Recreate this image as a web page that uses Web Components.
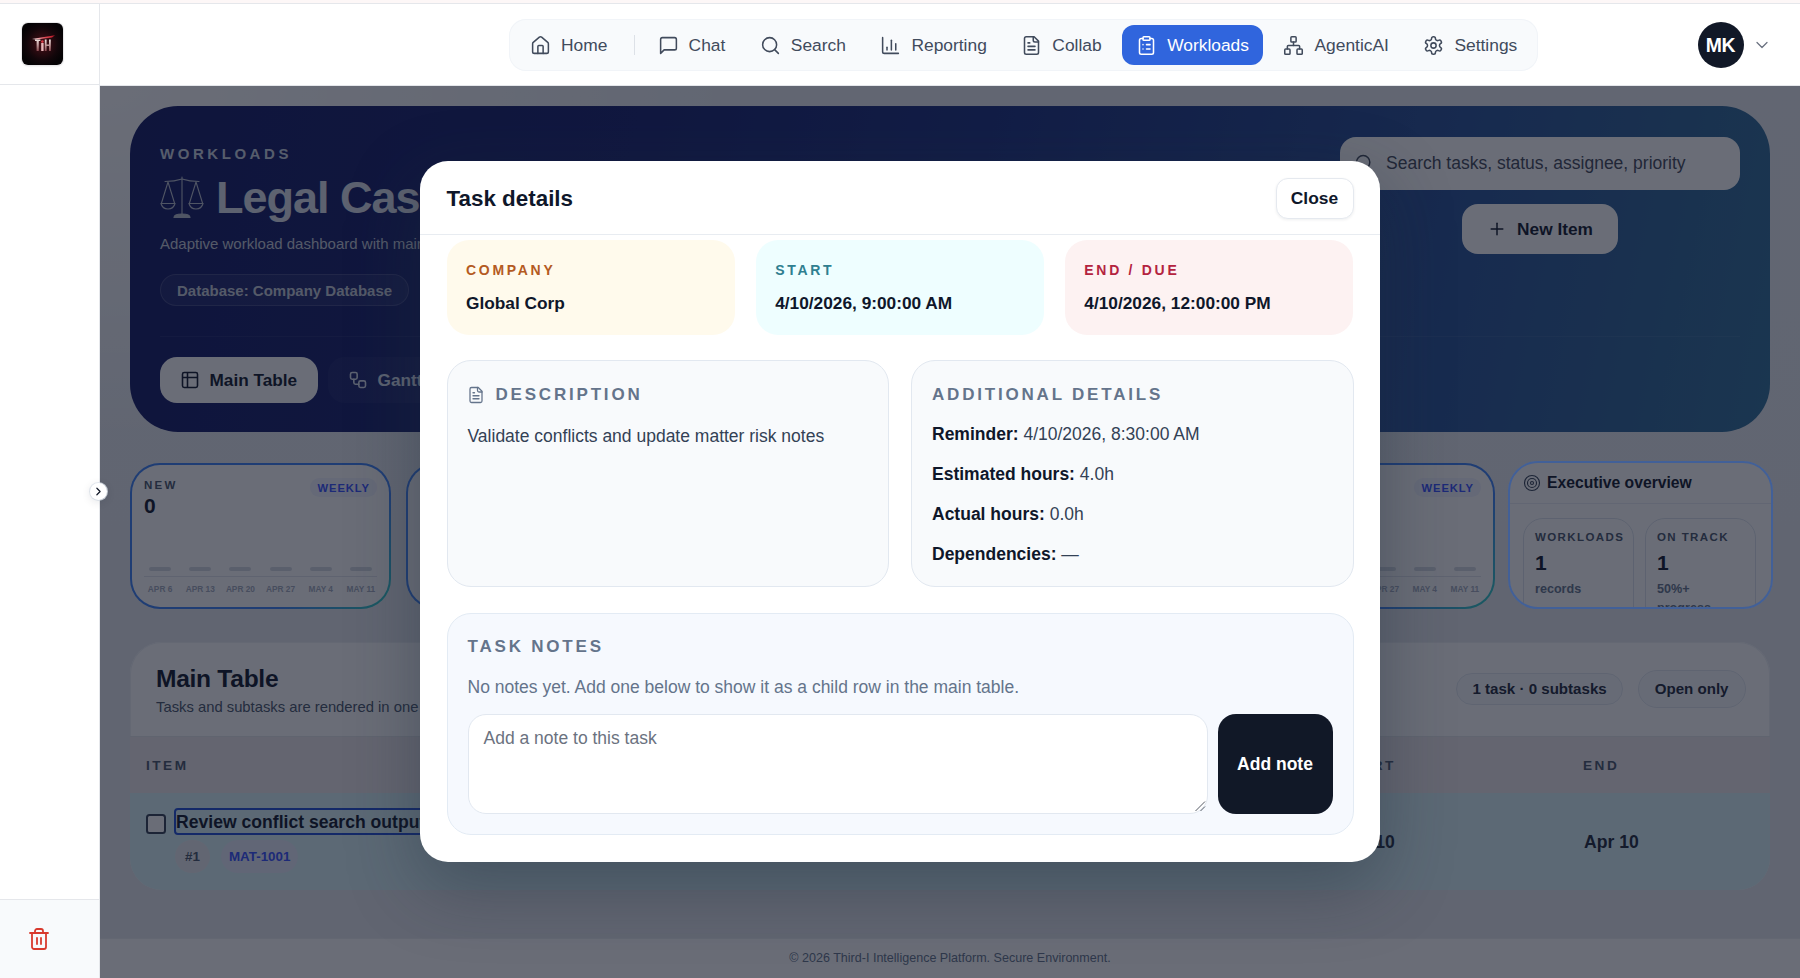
<!DOCTYPE html>
<html lang="en">
<head>
<meta charset="utf-8">
<title>Workloads</title>
<style>
  html,body{margin:0;padding:0;height:978px;overflow:hidden;background:#fff;font-family:"Liberation Sans",Arial,sans-serif;color:#0f172a}
</style>
</head>
<body>
<app-frame>
  <side-rail slot="rail"></side-rail>
  <top-bar slot="top">
    <nav-item icon="home">Home</nav-item>
    <nav-sep></nav-sep>
    <nav-item icon="chat">Chat</nav-item>
    <nav-item icon="search">Search</nav-item>
    <nav-item icon="chart">Reporting</nav-item>
    <nav-item icon="file">Collab</nav-item>
    <nav-item icon="clipboard" active>Workloads</nav-item>
    <nav-item icon="network">AgenticAI</nav-item>
    <nav-item icon="gear">Settings</nav-item>
  </top-bar>
  <work-area slot="main">
    <hero-panel></hero-panel>
    <kpi-row>
      <kpi-card label="New" value="0" weeks></kpi-card>
      <kpi-card></kpi-card>
      <kpi-card></kpi-card>
      <kpi-card></kpi-card>
      <kpi-card weeks></kpi-card>
      <exec-card></exec-card>
    </kpi-row>
    <main-table></main-table>
    <page-footer>© 2026 Third-I Intelligence Platform. Secure Environment.</page-footer>
    <dim-layer></dim-layer>
  </work-area>
</app-frame>
<task-modal></task-modal>

<script>
const ICONS={
 home:'<path d="M15 21v-8a1 1 0 0 0-1-1h-4a1 1 0 0 0-1 1v8"/><path d="M3 10a2 2 0 0 1 .709-1.528l7-5.999a2 2 0 0 1 2.582 0l7 5.999A2 2 0 0 1 21 10v9a2 2 0 0 1-2 2H5a2 2 0 0 1-2-2z"/>',
 chat:'<path d="M21 15a2 2 0 0 1-2 2H7l-4 4V5a2 2 0 0 1 2-2h14a2 2 0 0 1 2 2z"/>',
 search:'<circle cx="11" cy="11" r="8"/><path d="m21 21-4.3-4.3"/>',
 chart:'<path d="M3 3v16a2 2 0 0 0 2 2h16"/><path d="M18 17V10"/><path d="M13 17V6"/><path d="M8 17v-3"/>',
 file:'<path d="M15 2H6a2 2 0 0 0-2 2v16a2 2 0 0 0 2 2h12a2 2 0 0 0 2-2V7Z"/><path d="M14 2v4a2 2 0 0 0 2 2h4"/><path d="M10 9H8"/><path d="M16 13H8"/><path d="M16 17H8"/>',
 clipboard:'<rect width="8" height="4" x="8" y="2" rx="1" ry="1"/><path d="M16 4h2a2 2 0 0 1 2 2v14a2 2 0 0 1-2 2H6a2 2 0 0 1-2-2V6a2 2 0 0 1 2-2h2"/><path d="M12 11h4"/><path d="M12 16h4"/><path d="M8 11h.01"/><path d="M8 16h.01"/>',
 network:'<rect x="16" y="16" width="6" height="6" rx="1"/><rect x="2" y="16" width="6" height="6" rx="1"/><rect x="9" y="2" width="6" height="6" rx="1"/><path d="M5 16v-3a1 1 0 0 1 1-1h12a1 1 0 0 1 1 1v3"/><path d="M12 12V8"/>',
 gear:'<path d="M12.22 2h-.44a2 2 0 0 0-2 2v.18a2 2 0 0 1-1 1.73l-.43.25a2 2 0 0 1-2 0l-.15-.08a2 2 0 0 0-2.73.73l-.22.38a2 2 0 0 0 .73 2.73l.15.1a2 2 0 0 1 1 1.72v.51a2 2 0 0 1-1 1.74l-.15.09a2 2 0 0 0-.73 2.73l.22.38a2 2 0 0 0 2.73.73l.15-.08a2 2 0 0 1 2 0l.43.25a2 2 0 0 1 1 1.73V20a2 2 0 0 0 2 2h.44a2 2 0 0 0 2-2v-.18a2 2 0 0 1 1-1.73l.43-.25a2 2 0 0 1 2 0l.15.08a2 2 0 0 0 2.73-.73l.22-.39a2 2 0 0 0-.73-2.73l-.15-.08a2 2 0 0 1-1-1.74v-.5a2 2 0 0 1 1-1.74l.15-.09a2 2 0 0 0 .73-2.73l-.22-.38a2 2 0 0 0-2.73-.73l-.15.08a2 2 0 0 1-2 0l-.43-.25a2 2 0 0 1-1-1.73V4a2 2 0 0 0-2-2z"/><circle cx="12" cy="12" r="3"/>',
 table:'<path d="M9 3H5a2 2 0 0 0-2 2v4m6-6h10a2 2 0 0 1 2 2v4M9 3v18m0 0h10a2 2 0 0 0 2-2V9M9 21H5a2 2 0 0 1-2-2V9m0 0h18"/>',
 workflow:'<rect width="8" height="8" x="3" y="3" rx="2"/><path d="M7 11v4a2 2 0 0 0 2 2h4"/><rect width="8" height="8" x="13" y="13" rx="2"/>',
 target:'<circle cx="12" cy="12" r="10"/><circle cx="12" cy="12" r="6"/><circle cx="12" cy="12" r="2"/>',
 trash:'<path d="M3 6h18"/><path d="M19 6v14c0 1-1 2-2 2H7c-1 0-2-1-2-2V6"/><path d="M8 6V4c0-1 1-2 2-2h4c1 0 2 1 2 2v2"/><line x1="10" x2="10" y1="11" y2="17"/><line x1="14" x2="14" y1="11" y2="17"/>',
 plus:'<path d="M5 12h14"/><path d="M12 5v14"/>',
 down:'<path d="m6 9 6 6 6-6"/>',
 right:'<path d="m9 18 6-6-6-6"/>'
};
const icon=(n,s,w=1.8)=>`<svg xmlns="http://www.w3.org/2000/svg" width="${s}" height="${s}" viewBox="0 0 24 24" fill="none" stroke="currentColor" stroke-width="${w}" stroke-linecap="round" stroke-linejoin="round" style="flex:none;display:block">${ICONS[n]}</svg>`;

function def(tag,css,html){
  customElements.define(tag,class extends HTMLElement{
    constructor(){super();this.attachShadow({mode:'open'});}
    connectedCallback(){
      const a=n=>this.getAttribute(n)||'';
      this.shadowRoot.innerHTML=`<style>${css}</style>`+(typeof html==='function'?html(a,this):html);
    }
  });
}

def('app-frame',`
  :host{display:grid;grid-template-columns:100px 1fr;grid-template-rows:82px 892px;height:978px;box-sizing:border-box;padding-top:4px;position:relative;background:linear-gradient(#fdf7f7,#fdf7f7) top/100% 3px no-repeat,#fff}
  .line{position:absolute;left:0;right:0;top:3px;height:1px;background:#e5e7eb}
  ::slotted([slot=rail]){grid-row:1/3}
`,`<div class="line"></div><slot name="rail"></slot><slot name="top"></slot><slot name="main"></slot>`);

def('side-rail',`
  :host{display:flex;flex-direction:column;position:relative;z-index:10;background:#fff;border-right:1px solid #e5e7eb;box-sizing:border-box;width:100px;height:974px}
  .logo{height:81px;box-sizing:border-box;border-bottom:1px solid #e5e7eb;display:flex;align-items:flex-start;padding:19px 0 0 22px}
  .logo svg{display:block;border-radius:6px;box-shadow:0 0 0 1px #e8e8ea,0 1px 2px rgba(0,0,0,.15)}
  .fill{flex:1}
  .foot{height:79px;box-sizing:border-box;border-top:1px solid #e5e7eb;background:#f8fafc;display:flex;align-items:flex-start;padding:27px 0 0 27px;color:#d83a2e}
  .toggle{position:absolute;right:-8px;top:479px;width:17px;height:17px;border-radius:50%;background:#fff;display:flex;align-items:center;justify-content:center;color:#111827;box-shadow:0 2px 10px rgba(15,23,42,.12),0 0 0 1px rgba(226,232,240,.8)}
`,`<div class="logo"><svg width="41" height="42" viewBox="0 0 41 42" xmlns="http://www.w3.org/2000/svg">
    <defs><radialGradient id="g" cx=".5" cy=".5" r=".55"><stop offset="0" stop-color="#4a1018"/><stop offset=".7" stop-color="#12060a"/><stop offset="1" stop-color="#050305"/></radialGradient>
    <linearGradient id="s" x1="0" x2="1"><stop offset="0" stop-color="#ffffff"/><stop offset=".55" stop-color="#e0505a"/><stop offset="1" stop-color="#b4121f"/></linearGradient>
    <linearGradient id="p" x1="0" x2="0" y1="0" y2="1"><stop offset="0" stop-color="#efe3e0"/><stop offset="1" stop-color="#8a4a50"/></linearGradient></defs>
    <rect width="41" height="42" fill="url(#g)"/>
    <path d="M10 16 L33 12.2 L30 14.4 L14 16.6 Z" fill="url(#s)"/>
    <path d="M13 16.6h5.4v1.3h-1.6v10h-2.2v-10H13z" fill="url(#p)"/>
    <path d="M19.2 20h2.4v8h-2.4z" fill="#e9b7ba"/><circle cx="20.4" cy="18.6" r="1.3" fill="#d63a45"/>
    <path d="M22.8 16.6h1.8v4.8h2.4v-4.8h1.8v11.3H27v-5h-2.4v5h-1.8z" fill="url(#p)"/>
  </svg></div>
  <div class="fill"></div>
  <div class="foot">${icon('trash',24,1.8)}</div>
  <div class="toggle">${icon('right',13,2.2)}</div>`);

def('top-bar',`
  :host{display:flex;align-items:flex-start;height:82px;box-sizing:border-box;border-bottom:1px solid #e5e7eb;background:#fff}
  nav{margin:15px 0 0 409px;width:1029px;flex:none;height:52px;box-sizing:border-box;padding:6px 7px;border-radius:17px;background:#f8fafc;box-shadow:inset 0 0 0 1px #f1f4f8;display:flex;align-items:center;gap:6.5px}
  .user{margin-left:auto;display:flex;align-items:center;gap:8px;padding:18px 28.5px 0 0}
  .av{width:46px;height:46px;border-radius:50%;background:#111827;color:#fff;font-weight:700;font-size:19.4px;display:flex;align-items:center;justify-content:center;letter-spacing:-.3px}
  .chev{color:#6b7280}
`,`<nav><slot></slot></nav><div class="user"><div class="av">MK</div><div class="chev">${icon('down',20,1.5)}</div></div>`);

def('nav-item',`
  :host{display:flex;flex:none;align-items:center;gap:10px;height:40px;padding:0 14px;border-radius:12px;color:#414b5c;font-size:17.4px;white-space:nowrap;box-sizing:border-box}
  :host([active]){background:#3065dd;color:#fff}
`,a=>`${icon(a('icon'),21,1.75)}<slot></slot>`);

def('nav-sep',`:host{display:block;flex:none;width:1.2px;height:20px;background:#dde1e7;margin:0 2px 0 6px}`,'');

def('work-area',`
  :host{display:flex;flex-direction:column;position:relative;z-index:0;box-sizing:border-box;height:892px;padding:20px 30px 0;overflow:hidden;
    background:radial-gradient(900px 500px at 0% 0%,#fff 0,rgba(255,255,255,0) 70%),linear-gradient(#e9edf2,#e6e9ee)}
`,`<slot></slot>`);

def('dim-layer',`:host{position:absolute;inset:0;z-index:5;background:rgba(15,20,35,.62);display:block}`,'');

def('hero-panel',`
  :host{display:block;box-sizing:border-box;height:326px;padding:30.5px 30px 0;border-radius:48px;color:#fff;
    background:linear-gradient(102deg,#111863 0%,#15206e 30%,#1a3080 52%,#264f95 78%,#2f6f98 100%)}
  .top{display:flex;justify-content:space-between;height:200.5px;border-bottom:1px solid rgba(255,255,255,.06);box-sizing:border-box}
  .left{display:flex;flex-direction:column;align-items:flex-start}
  .eye{margin-top:9.5px;font-size:15px;line-height:15px;font-weight:700;letter-spacing:3.55px;color:#cbd5e1}
  .title{margin-top:11px;display:flex;align-items:center;gap:12px;height:51px;font-size:45px;font-weight:700;letter-spacing:-1px;line-height:51px;white-space:nowrap;color:#dde2ec}
  .sub{margin-top:11px;font-size:15px;line-height:20px;color:#c5ccd8;white-space:nowrap}
  .chip{margin-top:20px;height:32px;box-sizing:border-box;border-radius:16px;padding:0 16px;display:flex;align-items:center;font-size:15px;font-weight:700;color:#c5ccd8;background:rgba(255,255,255,.06);border:1px solid rgba(255,255,255,.14)}
  .right{width:400px;display:flex;flex-direction:column;align-items:center}
  .search{width:400px;height:53px;border-radius:16px;background:#fff;display:flex;align-items:center;gap:12px;padding-left:14px;box-sizing:border-box;color:#3f4858;font-size:17.5px;white-space:nowrap}
  .new{margin-top:14.5px;width:156px;height:50px;border-radius:16px;background:#fff;color:#0f172a;display:flex;align-items:center;justify-content:center;gap:10px;font-weight:700;font-size:17.3px}
  .tabs{display:flex;gap:10px;margin-top:20px}
  .tab{height:46px;box-sizing:border-box;border-radius:17px;display:flex;align-items:center;gap:9.5px;padding:0 21px 0 20px;font-size:17.2px;font-weight:700;color:#dbe3ee;background:rgba(255,255,255,.04)}
  .tab.on{background:#fff;color:#0f172a}
`,`<div class="top">
    <div class="left">
      <div class="eye">WORKLOADS</div>
      <div class="title"><svg width="44" height="44" viewBox="0 0 44 44" fill="none" stroke="#b9bfcc" stroke-width="1.1" stroke-linecap="round" style="flex:none"><path d="M22 1v37"/><path d="M5 5.5c6 0 11-.5 17-2.5 6 2 11 2.500 17 2.500"/><path d="M8 6 1.500 27M8 6l6.500 21M36 6l-6.500 21M36 6l6.500 21"/><path d="M1 27.500c1 4 4 5.500 7 5.500s6-1.500 7-5.500z"/><path d="M29 27.500c1 4 4 5.500 7 5.500s6-1.500 7-5.500z"/><path d="M14 41.500c0-2.500 3-3.500 8-3.500s8 1 8 3.500z" fill="#b9bfcc"/></svg><span>Legal Case</span></div>
      <div class="sub">Adaptive workload dashboard with main table</div>
      <div class="chip">Database: Company Database</div>
    </div>
    <div class="right">
      <div class="search">${icon('search',20,1.8)}<span>Search tasks, status, assignee, priority</span></div>
      <div class="new">${icon('plus',20,1.8)}<span>New Item</span></div>
    </div>
  </div>
  <div class="tabs"><div class="tab on">${icon('table',20,1.9)}Main Table</div><div class="tab">${icon('workflow',20,1.9)}Gantt</div></div>`);

def('kpi-row',`:host{display:grid;grid-template-columns:repeat(5,261px) 265px;column-gap:15px;height:146px;margin-top:31px}
  ::slotted(exec-card){margin-left:-2px}`,`<slot></slot>`);

const WEEKS=['APR 6','APR 13','APR 20','APR 27','MAY 4','MAY 11'];
def('kpi-card',`
  :host{display:flex;flex-direction:column;box-sizing:border-box;height:146px;border:2px solid transparent;border-radius:30px;padding:14px 12px 12px;
    background:linear-gradient(#fff,#fff) padding-box,linear-gradient(135deg,#3b82f6 0%,#3b82f6 72%,#2dd4bf 100%) border-box}
  .head{display:flex;justify-content:space-between;align-items:flex-start}
  .lab{font-size:11.5px;line-height:12px;font-weight:700;letter-spacing:2.2px;color:#475569;text-transform:uppercase;white-space:nowrap}
  .val{margin-top:4px;font-size:21px;line-height:22px;font-weight:700;color:#0f172a}
  .wk{margin-top:-1px;margin-left:auto;height:19px;border-radius:10px;padding:0 7px;background:#f1f3ff;color:#3550ff;font-size:11.2px;font-weight:700;letter-spacing:.95px;display:flex;align-items:center}
  .chart{margin:auto -4px 0}
  .bars,.labs{display:grid;grid-template-columns:repeat(6,1fr);justify-items:center}
  .bars i{display:block;width:22px;height:4px;border-radius:2px;background:#d6dae2}
  .base{height:1px;background:#e1e5ec;margin:5px 4px 6px}
  .labs span{font-size:8.3px;line-height:12px;font-weight:700;color:#a3abbd;white-space:nowrap}
`,(a,el)=>el.hasAttribute('weeks')?`<div class="head">${a('label')?`<div><div class="lab">${a('label')}</div><div class="val">${a('value')}</div></div>`:''}<div class="wk">WEEKLY</div></div>
  <div class="chart"><div class="bars">${WEEKS.map(()=>'<i></i>').join('')}</div><div class="base"></div><div class="labs">${WEEKS.map(w=>`<span>${w}</span>`).join('')}</div></div>`:'');

def('exec-card',`
  :host{display:block;position:relative;height:148px;margin-top:-2px;border-radius:30px;background:#fff;width:265px}
  .clip{height:100%;box-sizing:border-box;border-radius:30px;overflow:hidden;border:2px solid transparent}
  .ring{position:absolute;inset:0;border:2px solid rgb(66,96,152);border-radius:30px;z-index:6;pointer-events:none;box-sizing:border-box}
  .head{height:41px;box-sizing:border-box;display:flex;align-items:center;gap:6px;padding-left:13px;border-bottom:1px solid #e9edf3;font-size:15.7px;font-weight:700;color:#0f172a;white-space:nowrap}
  .head svg{color:#334155}
  .grid{display:grid;grid-template-columns:111px 111px;column-gap:11px;padding:14px 0 0 13px}
  .c{border:1px solid #dde3ec;border-radius:20px;padding:12px 11px 0;height:120px;box-sizing:border-box}
  .l{font-size:11.5px;line-height:13px;font-weight:700;letter-spacing:1.4px;color:#475569;white-space:nowrap}
  .v{margin-top:8px;font-size:21px;line-height:22px;font-weight:700;color:#0f172a}
  .s{margin-top:5.5px;font-size:12.6px;line-height:19px;font-weight:700;color:#64748b}
`,`<div class="clip"><div class="head">${icon('target',18,1.5)}<span>Executive overview</span></div>
  <div class="grid"><div class="c"><div class="l">WORKLOADS</div><div class="v">1</div><div class="s">records</div></div>
  <div class="c"><div class="l">ON TRACK</div><div class="v">1</div><div class="s">50%+<br>progress</div></div></div></div><div class="ring"></div>`);

def('main-table',`
  :host{display:block;box-sizing:border-box;height:248px;margin-top:33px;border-radius:32px;background:#fff;overflow:hidden;box-shadow:inset 0 0 0 1px #eef1f5}
  .top{height:95px;box-sizing:border-box;border-bottom:1px solid #e5e7eb;display:flex;justify-content:space-between;padding:25px 24.5px 0 26px}
  h2{margin:0;font-size:24.6px;line-height:24px;letter-spacing:-.3px;font-weight:700;color:#0f172a}
  p{margin:7px 0 0;font-size:14.8px;line-height:18px;color:#475569;white-space:nowrap}
  .pills{display:flex;align-items:center;gap:15px;height:43px}
  .pill{height:32px;box-sizing:border-box;border:1px solid #e2e8f0;border-radius:16px;padding:0 15px;display:flex;align-items:center;font-size:15.1px;font-weight:700;white-space:nowrap;color:#1e293b;background:#f8fafc}
  .pill.b{height:38px;border-radius:19px;padding:0 16px}
  .cols{display:grid;grid-template-columns:1193px 244px 1fr;padding-left:16px}
  .thead{height:56px;align-items:center;background:#efe9ec;font-size:13.6px;font-weight:700;letter-spacing:2.5px;color:#475569}
  .row{height:97px;background:#daf5fa;align-items:start;font-size:17.6px;font-weight:700;color:#1e293b}
  .row .date{padding-top:39px;line-height:20px;padding-left:1px}
  .ttl{display:flex;gap:8px;padding-top:15px;align-items:flex-start}
  .box{width:20px;height:20px;margin-top:6px;box-sizing:border-box;border:2px solid #334155;border-radius:3.500px;background:#fff;flex:none}
  .t{box-sizing:border-box;height:27px;line-height:24px;padding:0;border:2.400px solid #1d4ed8;border-radius:4px;color:#0f172a;white-space:nowrap}
  .tags{display:flex;gap:11px;margin:5px 0 0 29px}
  .tag{height:33px;border-radius:17px;display:flex;align-items:center;font-size:13.4px;font-weight:700;padding:0 10px;background:#ebedf1;color:#475569}
  .tag.m{padding:0 8px;background:#e6ecfb;color:#3550ff}
`,`<div class="top"><div><h2>Main Table</h2><p>Tasks and subtasks are rendered in one table.</p></div>
    <div class="pills"><div class="pill">1 task · 0 subtasks</div><div class="pill b">Open only</div></div></div>
  <div class="cols thead"><div>ITEM</div><div>START</div><div>END</div></div>
  <div class="cols row"><div><div class="ttl"><div class="box"></div><div class="t">Review conflict search output</div></div><div class="tags"><div class="tag">#1</div><div class="tag m">MAT-1001</div></div></div><div class="date">Apr 10</div><div class="date">Apr 10</div></div>`);

def('page-footer',`
  :host{display:block;position:absolute;left:0;right:0;bottom:0;height:40px;box-sizing:border-box;border-top:1px solid #eceef2;background:#fff;text-align:center;font-size:12.55px;line-height:38px;color:#64748b}
`,`<slot></slot>`);

def('info-tile',`
  :host{display:block;box-sizing:border-box;height:95px;border-radius:22px;padding:22px 20px 0 19.5px;background:var(--bg)}
  .l{font-size:14px;line-height:16px;font-weight:700;letter-spacing:2.7px;color:var(--fg)}
  .v{margin-top:13.500px;font-size:17.3px;line-height:22px;font-weight:700;color:#0f172a;white-space:nowrap}
`,a=>`<div class="l">${a('label')}</div><div class="v"><slot></slot></div>`);

def('detail-panel',`
  :host{display:block;box-sizing:border-box;height:227px;border:1px solid #e2e8f0;border-radius:24px;background:#f8fafc;padding:24px 20px 0}
  .h{display:flex;align-items:center;gap:11px;height:20px;font-size:17px;font-weight:700;letter-spacing:2.8px;color:#64748b;white-space:nowrap}
  .h svg{margin-left:-1px}
  .b{margin-top:19px;display:flex;flex-direction:column;gap:20px;font-size:17.5px;line-height:20px;color:#334155}
`,a=>`<div class="h">${a('icon')?icon(a('icon'),18,1.7):''}<span>${a('heading')}</span></div><div class="b"><slot></slot></div>`);

def('task-modal',`
  :host{position:absolute;left:420px;top:161px;width:960px;height:701px;z-index:30;display:flex;flex-direction:column;background:#fff;border-radius:28px;box-shadow:0 24px 70px rgba(30,45,60,.4);overflow:hidden}
  .hd{height:74px;flex:none;box-sizing:border-box;border-bottom:1.500px solid #e8ecf1;display:flex;align-items:flex-start;justify-content:space-between;padding:17px 26.5px 0}
  h3{margin:0;font-size:22.4px;line-height:42px;font-weight:700;color:#0f172a}
  .close{width:78px;height:41px;box-sizing:border-box;border:1px solid #e5e9ef;border-radius:12px;background:#fff;display:flex;align-items:center;justify-content:center;font-size:17.4px;font-weight:700;color:#0f172a;box-shadow:0 1px 3px rgba(15,23,42,.07)}
  .bd{padding:5px 26.5px 0;display:flex;flex-direction:column}
  .tiles{display:grid;grid-template-columns:repeat(3,1fr);column-gap:20.500px}
  .two{display:grid;grid-template-columns:1fr 1fr;column-gap:22px;margin-top:25px}
  b{color:#0f172a}
  .desc{margin-top:2px}
  .notes{margin-top:26px;height:222px;box-sizing:border-box;border:1px solid #e3ebf4;border-radius:24px;background:#f6f9fe;padding:23px 20px 0}
  .nh{font-size:17px;line-height:20px;font-weight:700;letter-spacing:2.8px;color:#64748b}
  .np{margin-top:20px;font-size:17.5px;line-height:20px;color:#64748b}
  .form{display:flex;gap:10px;margin-top:17px}
  .ta{position:relative;flex:1;height:100px;box-sizing:border-box;border:1px solid #e2e8f0;border-radius:18px;background:#fff;padding:13px 15px;font-size:17.5px;line-height:20px;color:#6b7280}
  .grip{position:absolute;right:1px;bottom:1px;display:block}
  .add{width:115px;height:100px;flex:none;border-radius:18px;background:#111827;color:#fff;display:flex;align-items:center;justify-content:center;font-size:17.5px;font-weight:700}
`,`<div class="hd"><h3>Task details</h3><div class="close">Close</div></div>
  <div class="bd">
    <div class="tiles">
      <info-tile label="COMPANY" style="--bg:#fffaec;--fg:#b45a22">Global Corp</info-tile>
      <info-tile label="START" style="--bg:#eefeff;--fg:#2f7f90">4/10/2026, 9:00:00 AM</info-tile>
      <info-tile label="END / DUE" style="--bg:#fdf2f2;--fg:#b4233f">4/10/2026, 12:00:00 PM</info-tile>
    </div>
    <div class="two">
      <detail-panel heading="DESCRIPTION" icon="file"><div class="desc">Validate conflicts and update matter risk notes</div></detail-panel>
      <detail-panel heading="ADDITIONAL DETAILS">
        <div><b>Reminder:</b> 4/10/2026, 8:30:00 AM</div>
        <div><b>Estimated hours:</b> 4.0h</div>
        <div><b>Actual hours:</b> 0.0h</div>
        <div><b>Dependencies:</b> —</div>
      </detail-panel>
    </div>
    <div class="notes">
      <div class="nh">TASK NOTES</div>
      <div class="np">No notes yet. Add one below to show it as a child row in the main table.</div>
      <div class="form">
        <div class="ta">Add a note to this task<svg class="grip" width="12" height="12" viewBox="0 0 12 12" stroke="#555b66" stroke-width="1" fill="none"><path d="M1.500 11 11 1.500M6.500 11 11 6.500"/></svg></div>
        <div class="add">Add note</div>
      </div>
    </div>
  </div>`);
</script>
</body>
</html>
